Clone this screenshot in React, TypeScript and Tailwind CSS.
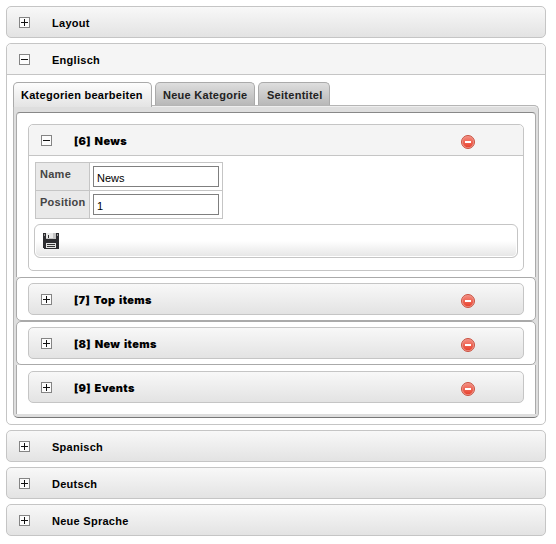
import React from 'react';

function Toggle({ open }: { open?: boolean }) {
  return (
    <svg width="11" height="11" viewBox="0 0 11 11" shapeRendering="crispEdges" className="shrink-0">
      <rect x="0.5" y="0.5" width="10" height="10" fill="#fcfcfc" stroke="#848484" />
      <rect x="2" y="5" width="7" height="1" fill="#111" />
      {!open && <rect x="5" y="2" width="1" height="7" fill="#111" />}
    </svg>
  );
}

function Remove() {
  return (
    <svg width="14" height="14" viewBox="0 0 14 14" className="mt-[3px] shrink-0">
      <defs>
        <linearGradient id="red" x1="0" y1="0" x2="0" y2="1">
          <stop offset="0" stopColor="#f4877a" />
          <stop offset="1" stopColor="#e8432f" />
        </linearGradient>
      </defs>
      <circle cx="7" cy="7" r="6.5" fill="#f0958a" stroke="#c9503f" />
      <circle cx="7" cy="7" r="5.2" fill="url(#red)" />
      <rect x="4" y="6" width="6" height="2" fill="#fff" />
    </svg>
  );
}

function Disk() {
  return (
    <svg width="16" height="16" viewBox="0 0 16 16" shapeRendering="crispEdges">
      <path d="M0 0h16v15l-1 1H1l-1-1z" fill="#2c2c30" />
      <rect x="3" y="0" width="10" height="6" fill="#c4c4c4" />
      <rect x="3" y="0" width="7" height="5" fill="#e9e9e9" />
      <rect x="5" y="2" width="1" height="3" fill="#333" />
      <rect x="1" y="1" width="1" height="2" fill="#999" />
      <rect x="14" y="1" width="1" height="2" fill="#999" />
      <rect x="3" y="10" width="10" height="5" fill="#e4e4e4" />
      <rect x="4" y="11" width="8" height="1" fill="#333" />
      <rect x="4" y="13" width="8" height="1" fill="#333" />
    </svg>
  );
}

const grad = 'bg-linear-to-b from-[#f8f8f8] to-[#e3e3e3]';

function Section({ title }: { title: string }) {
  return (
    <div className={`flex h-8 items-center rounded-[5px] border border-[#c5c5c5] pl-3 ${grad}`}>
      <Toggle />
      <span className="ml-[22px] pt-[3px]">{title}</span>
    </div>
  );
}

function ItemHead({ title, open }: { title: string; open?: boolean }) {
  return (
    <div
      className={
        open
          ? 'flex h-[31px] items-center rounded-t-[5px] border-b border-[#c5c5c5] bg-[#f4f4f4] pl-3'
          : `flex h-8 items-center rounded-[5px] border border-[#c5c5c5] pl-3 ${grad}`
      }
    >
      <Toggle open={open} />
      <span className="ml-[22px] w-[387px] pt-[2px] font-[Inter,sans-serif] text-[11px] font-black tracking-[0.32px] text-black [word-spacing:1.2px]">
        {title}
      </span>
      <Remove />
    </div>
  );
}

function Field({ label, value, first }: { label: string; value: string; first?: boolean }) {
  return (
    <div className={`flex ${first ? 'h-[27px]' : 'h-7 border-t border-[#c5c5c5]'}`}>
      <div className="w-[54px] border-r border-[#c5c5c5] bg-[#e9e9e9] pt-[4px] pl-1 text-[#444]">{label}</div>
      <div className="pt-[3px] pl-[3px]">
        <input
          defaultValue={value}
          className="block h-[21px] w-[126px] border border-[#7f7f7f] bg-white px-[3px] pt-0.5 font-['Liberation_Sans',sans-serif] text-[11px] font-normal tracking-normal text-black outline-none"
        />
      </div>
    </div>
  );
}

export default function App() {
  return (
    <div className="flex h-[544px] w-[556px] flex-col gap-[5px] bg-white pt-1.5 pr-2.5 pl-1.5 font-['Liberation_Sans',Arial,sans-serif] text-[11px] leading-[15px] font-bold tracking-[0.27px] text-black">
      <Section title="Layout" />
      <div className="h-[382px] rounded-[5px] border border-[#c5c5c5] bg-white">
        <div className="flex h-[31px] items-center rounded-t-[5px] border-b border-[#c5c5c5] bg-[#f5f5f5] pl-3">
          <Toggle open />
          <span className="ml-[22px] pt-[3px]">Englisch</span>
        </div>
        <div className="px-1.5 pt-[7px]">
          <div className="relative z-10 flex h-6 items-start gap-[3px] whitespace-nowrap">
            <div className="h-[25px] w-[139px] rounded-t-[5px] border border-b-0 border-[#aaa] bg-linear-to-b from-[#fdfdfd] to-[#e4e4e4] pt-[5px] pl-[7px] text-black">
              Kategorien bearbeiten
            </div>
            <div className="h-[23px] w-[100px] rounded-t-[5px] border border-b-0 border-[#aaa] bg-linear-to-b from-[#dedede] to-[#b8b8b8] pt-[5px] pl-[7px] text-[#222]">
              Neue Kategorie
            </div>
            <div className="h-[23px] w-[72px] rounded-t-[5px] border border-b-0 border-[#aaa] bg-linear-to-b from-[#dedede] to-[#b8b8b8] pt-[5px] pl-[8px] text-[#222]">
              Seitentitel
            </div>
          </div>
          <div className="-mt-px h-[313px] rounded-[5px] rounded-tl-none border border-[#b5b5b5] border-b-[#777] bg-[#dedede] pt-1.5 pr-0.5 pl-0.5 shadow-[inset_0_1px_0_#eeeeee]">
            <div className="rounded-t-[4px] border border-b-0 border-[#aaa] border-t-[#888] bg-white px-[11px] pt-[11px] pb-1.5">
              <div className="h-[147px] rounded-[5px] border border-[#c5c5c5] bg-white">
                <ItemHead title="[6] News" open />
                <div className="px-[5px] pt-1.5">
                  <div className="ml-px w-[188px] border border-[#c5c5c5]">
                    <Field label="Name" value="News" first />
                    <Field label="Position" value="1" />
                  </div>
                  <div className="mt-[5px] flex h-[34px] w-[484px] items-center rounded-[6px] border border-[#c5c5c5] bg-linear-to-b from-white from-50% to-[#e5e5e5] pl-2 shadow-[inset_0_0_0_1px_#ffffff]">
                    <Disk />
                  </div>
                </div>
              </div>
            </div>
            <div className="h-11 rounded-[5px] border border-[#aaa] bg-white px-[11px] pt-[5px]">
              <ItemHead title="[7] Top items" />
            </div>
            <div className="h-11 rounded-[5px] border border-[#aaa] bg-white px-[11px] pt-[5px]">
              <ItemHead title="[8] New items" />
            </div>
            <div className="h-[49px] border-x border-[#aaa] bg-white px-[11px] pt-1.5">
              <ItemHead title="[9] Events" />
            </div>
          </div>
        </div>
      </div>
      <Section title="Spanisch" />
      <Section title="Deutsch" />
      <Section title="Neue Sprache" />
    </div>
  );
}
